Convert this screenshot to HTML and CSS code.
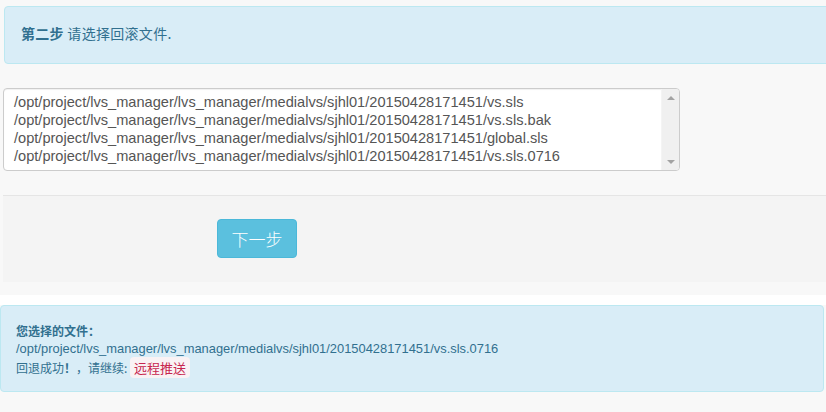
FILE: index.html
```html
<!DOCTYPE html>
<html lang="zh-CN">
<head>
<meta charset="utf-8">
<title>回滚</title>
<link rel="stylesheet" href="styles.css">
</head>
<body>
<div class="page">
  <div class="alert alert-step"><strong>第二步</strong> 请选择回滚文件.</div>

  <div class="select-box">
    <div class="options">
      <div class="opt">/opt/project/lvs_manager/lvs_manager/medialvs/sjhl01/20150428171451/vs.sls</div>
      <div class="opt">/opt/project/lvs_manager/lvs_manager/medialvs/sjhl01/20150428171451/vs.sls.bak</div>
      <div class="opt">/opt/project/lvs_manager/lvs_manager/medialvs/sjhl01/20150428171451/global.sls</div>
      <div class="opt">/opt/project/lvs_manager/lvs_manager/medialvs/sjhl01/20150428171451/vs.sls.0716</div>
    </div>
    <div class="scrollbar">
      <span class="arrow arrow-up"></span>
      <span class="arrow arrow-down"></span>
    </div>
  </div>

  <div class="form-actions">
    <button class="btn-next" type="button">下一步</button>
  </div>
  <div class="band"></div>

  <div class="alert alert-result">
    <div class="res-title">您选择的文件：</div>
    <div class="res-path">/opt/project/lvs_manager/lvs_manager/medialvs/sjhl01/20150428171451/vs.sls.0716</div>
    <div class="res-msg">回退成功<strong>！</strong>，请继续: <code class="code">远程推送</code></div>
  </div>
</div>
</body>
</html>
```

FILE: styles.css
```css
html, body {
  margin: 0;
  padding: 0;
}
body {
  background: #f8f8f8;
  font-family: "Liberation Sans", Arial, "Noto Sans CJK SC", sans-serif;
  overflow: hidden;
}
.page {
  width: 826px;
  height: 412px;
  overflow: hidden;
  padding-top: 6px;
  box-sizing: border-box;
}
.alert {
  background: #d9edf7;
  border: 1px solid #bce8f1;
  color: #31708f;
  border-radius: 4px;
  box-sizing: border-box;
}
.alert-step {
  margin-left: 4px;
  width: 840px;
  height: 58px;
  padding: 16px 16px 0;
  font-size: 14px;
  line-height: 20px;
  font-family: "Noto Sans CJK SC", sans-serif;
  letter-spacing: 0.3px;
}
.alert-step strong {
  font-weight: bold;
}
.select-box {
  margin: 24px 0 0 3px;
  width: 677px;
  height: 83px;
  box-sizing: border-box;
  background: #fff;
  border: 1px solid #ccc;
  border-radius: 4px;
  display: flex;
  box-shadow: inset 0 1px 1px rgba(0,0,0,0.06);
}
.options {
  flex: 1;
  padding: 4px 0 0 10px;
  color: #555;
  font-size: 14.6px;
  line-height: 18px;
}
.opt {
  white-space: nowrap;
}
.scrollbar {
  width: 17px;
  background: #f0f0f0;
  border-left: 1px solid #f4f4f4;
  display: flex;
  flex-direction: column;
  justify-content: space-between;
  align-items: center;
  padding: 7px 0 6px;
  border-radius: 0 3px 3px 0;
}
.arrow {
  width: 0;
  height: 0;
  border-left: 4px solid transparent;
  border-right: 4px solid transparent;
}
.arrow-up {
  border-bottom: 4px solid #a3a3a3;
}
.arrow-down {
  border-top: 4px solid #a3a3a3;
}
.form-actions {
  margin: 24px 0 0 3px;
  height: 87px;
  box-sizing: border-box;
  background: #f4f4f4;
  border-top: 1px solid #e5e5e5;
  padding: 23px 0 0 214px;
}
.btn-next {
  width: 80px;
  height: 39px;
  background: #5bc0de;
  border: 1px solid #4bb8d9;
  border-radius: 4px;
  color: #fff;
  font-family: "Noto Sans CJK SC", sans-serif;
  font-weight: 300;
  font-size: 17px;
  line-height: 22px;
  padding: 0;
}
.band {
  height: 13px;
  background: #f8f8f8;
  margin-bottom: 10px;
  box-shadow: 0 10px 0 #ffffff;
}
.alert-result {
  width: 824px;
  height: 87px;
  padding: 16px 15px 0;
  font-size: 12px;
  line-height: 18px;
}
.res-title {
  font-family: "Noto Sans CJK SC", sans-serif;
  font-weight: bold;
  line-height: 18px;
}
.res-path {
  font-size: 12.9px;
  line-height: 17px;
}
.res-msg {
  font-family: "Noto Sans CJK SC", sans-serif;
  margin-top: 2px;
}
.code {
  font-family: "Noto Sans CJK SC", sans-serif;
  font-size: 13px;
  color: #c7254e;
  background: #f9f2f4;
  border-radius: 4px;
  padding: 1px 4px;
}
```
